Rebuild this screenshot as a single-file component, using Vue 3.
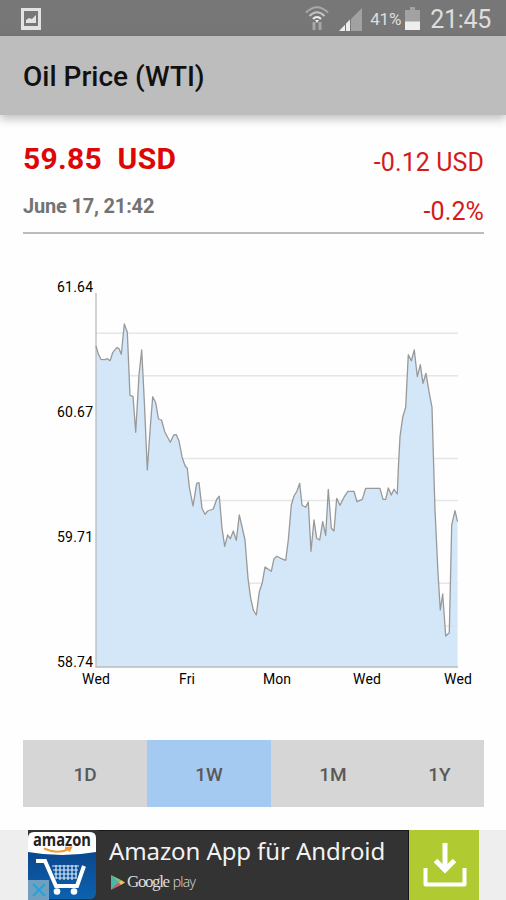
<template>
  <div class="screen">
    <div class="status-bar">
      <svg class="picture-icon" width="20" height="22" viewBox="0 0 20 22">
        <path fill="#e2e2e2" fill-rule="evenodd" d="M0 0h20v22H0zM3 3v15h14V3z" />
        <path fill="#e2e2e2" d="M5 15v-3l3-2 3 1 4-4v8z" />
      </svg>
      <svg class="wifi-icon" width="24" height="26" viewBox="0 0 24 26">
        <g fill="none" stroke-width="2">
          <path stroke="#a9a9a9" d="M1 7.5Q12-3 23 7.5" />
          <path stroke="#c4c4c4" d="M4.5 11Q12 3.500 19.500 11" />
          <path stroke="#eee" d="M8 14Q12 10 16 14" />
        </g>
        <path fill="#eee" d="M10 15h4l-2 3z" />
        <path stroke="#a6a6a6" stroke-width="3" d="M9 17v8M15 25v-8" />
      </svg>
      <svg class="signal-icon" width="23" height="23" viewBox="0 0 23 23">
        <path fill="#a2a2a2" d="M23 0v23H11V12z" />
        <path fill="#eee" d="M0 23L11 11.500V23z" />
        <path stroke="#777" stroke-width="1" d="M6.500 14v9M11.500 10v13" />
      </svg>
      <span class="battery-text">41%</span>
      <svg class="battery-icon" width="15" height="23" viewBox="0 0 15 23">
        <path fill="#a2a2a2" d="M5 0h5v3h5v12H0V3h5z" />
        <path fill="#eee" d="M0 14.500h15V23H0z" />
      </svg>
      <span class="clock">21:45</span>
    </div>

    <div class="app-bar">
      <h1>Oil Price (WTI)</h1>
    </div>

    <div class="summary">
      <div class="summary-left">
        <div class="price">59.85&nbsp; USD</div>
        <div class="date">June 17, 21:42</div>
      </div>
      <div class="summary-right">
        <div>-0.12 USD</div>
        <div>-0.2%</div>
      </div>
    </div>

    <svg class="chart" width="506" height="430" viewBox="0 270 506 430">
      <g stroke="#e6e6e6" stroke-width="1.500">
        <line v-for="y in gridLines" :key="y" x1="96" x2="458" :y1="y" :y2="y" />
      </g>
      <path class="area" :d="areaPath" />
      <path class="axis" d="M96 293V667H458" />
      <path class="line" :d="linePath" />
      <g text-anchor="end">
        <text v-for="l in yLabels" :key="l.text" x="93" :y="l.y" textLength="36">{{ l.text }}</text>
      </g>
      <g text-anchor="middle">
        <text v-for="l in xLabels" :key="l.x" :x="l.x" y="683.500" :textLength="l.w">{{ l.text }}</text>
      </g>
    </svg>

    <div class="ranges">
      <button
        v-for="r in ranges"
        :key="r"
        :class="{ active: r === selected }"
        @click="selected = r"
      >{{ r }}</button>
    </div>

    <div class="ad">
      <div class="ad-banner">
        <svg class="ad-logo" width="70" height="70" viewBox="0 0 70 70">
          <defs>
            <linearGradient id="blue" x1="0" y1="0" x2="0" y2="1">
              <stop offset="0" stop-color="#0a3c80" />
              <stop offset="1" stop-color="#0c62ae" />
            </linearGradient>
          </defs>
          <rect y="2" width="68" height="67" rx="6" fill="url(#blue)" />
          <path fill="#fff" d="M0 8Q0 2 6 2H62Q68 2 68 8V22Q34 28 0 22z" />
          <text class="amazon" x="5" y="16" textLength="58" lengthAdjust="spacingAndGlyphs">amazon</text>
          <path fill="none" stroke="#f49a35" stroke-width="2" d="M16 18.500Q30 25 42 18.500M37 18l6-.5-2 4" />
          <path fill="none" stroke="#fff" stroke-width="4" d="M8 31h9l11 25h21l7-20" />
          <path fill="none" stroke="#dbe8f5" stroke-width="1.200" d="M24 36h27M25 40h25M26 44h23M28 48h20M28 35v14M32 35v15M36 35v15M40 35v15M44 35v15M48 35v14" />
          <circle cx="29" cy="61.500" r="3.300" fill="#fff" />
          <circle cx="46" cy="61.500" r="3.300" fill="#fff" />
          <path fill="#719fc0" d="M0 50h21v20H0z" />
          <path stroke="#23a3d8" stroke-width="2" d="M5 54l12 12M17 54L5 66" />
        </svg>
        <div class="ad-text">
          <div class="ad-title">Amazon App für Android</div>
          <div class="google-play">
            <svg width="14" height="15" viewBox="0 0 14 15">
              <path fill="#48b9a5" d="M0 0l8 7.500L0 15z" />
              <path fill="#75c884" d="M0 0l10 5-2.500 2.500z" />
              <path fill="#dc5960" d="M0 15l10-5-2.500-2.500z" />
              <path fill="#efc35c" d="M10 5l4 2.500-4 2.500-2.500-2.500z" />
            </svg>
            <span class="google">Google</span>
            <span class="play">play</span>
          </div>
        </div>
        <div class="download">
          <svg width="44" height="46" viewBox="0 0 44 46">
            <g fill="none" stroke="#fff">
              <path stroke-width="5" d="M22 1v25" />
              <path stroke-width="5" d="M12.500 18.500L22 28l9.500-9.500" />
              <path stroke-width="4" stroke-linejoin="round" d="M2.500 26v16.500h39V26" />
            </g>
          </svg>
        </div>
      </div>
    </div>
  </div>
</template>

<script setup>
import { ref, computed } from 'vue'

const ranges = ['1D', '1W', '1M', '1Y']
const selected = ref('1W')

const gridLines = [333.3, 375.7, 458.5, 500.5, 583.3, 626]

const yLabels = [
  { text: '61.64', y: 292.4 },
  { text: '60.67', y: 417.4 },
  { text: '59.71', y: 542.4 },
  { text: '58.74', y: 667 }
]

const xLabels = [
  { text: 'Wed', x: 96, w: 28 },
  { text: 'Fri', x: 187, w: 16 },
  { text: 'Mon', x: 277, w: 28 },
  { text: 'Wed', x: 367, w: 28 },
  { text: 'Wed', x: 458, w: 28 }
]

// x,y pairs of the price curve
const points = `
  96,346 98.3,354 101,359.3 105,359.7 107,358.5 110,360.7 112.7,352.7 116.7,347.7
  119,348.7 121.3,354.3 124.3,324 127.3,332.3 130,395.3 133,396.3 135.7,432.3
  139,375 141.7,350 144.5,405 147.3,470 150.3,426.7 152.7,396.7 155.7,402.7
  158.5,419 161.5,420 164.7,431.7 170.3,442.3 173.7,435 176.3,434.7 179,441
  182,456.7 185,465.7 187.3,468.3 189.3,487 193,506 196.7,483.3 199,482.7
  202,508.3 205,514.3 207.7,511 213.3,509 216.7,499.3 219.3,496.3 222,528
  224.7,546.3 227.7,535 230.3,538.7 233.3,531 236.3,540.3 239.3,515 242.3,528
  245,540 248,578.3 250.7,598.3 253.3,610 256.3,615 259.3,591.7 262.3,582.7
  265,567 271.3,571.3 274,558.7 277,556.3 280.7,558.3 285.7,560.3 288.3,540
  291.3,505 294,496 297,491 299.7,483.3 302,505.3 305.7,507.3 308.3,502
  311,551.3 314,520 316.7,538.3 319.7,540 322.7,521.7 325.7,535.3 328.3,489.3
  331.3,528.3 334,531 336.7,498.3 340,505.3 344.3,496.7 348,491.3 354,491.3
  357,501.7 362.3,499.3 365.7,488.3 380,488.3 383,499.3 385.7,499.3 388.3,488
  391.3,495 394,489.3 397.3,494 398.5,465 400,436.7 402.7,417.3 405.7,407.3
  408.3,354.7 411.3,360.7 414.3,350 417.3,376.7 420.3,364.7 423,383.3 426,373.3
  429,391.7 432,407.3 433.7,466.7 435,510 438,573.3 440.3,610 442.7,594
  445.7,636 449.3,632.7 451.7,525 455,510.7 457.5,521.7
`.trim().split(/\s+/)

const linePath = computed(() => 'M' + points.join('L'))
const areaPath = computed(() => `${linePath.value}V667H96Z`)
</script>

<style>
body {
  margin: 0;
  background: #fff;
}
</style>

<style scoped>
.screen {
  width: 506px;
  height: 900px;
  overflow: hidden;
  display: flex;
  flex-direction: column;
  background: #fefefe;
  font-family: Roboto, "Liberation Sans", sans-serif;
}

.screen > * {
  flex-shrink: 0;
}

.status-bar {
  height: 36px;
  box-sizing: border-box;
  display: flex;
  align-items: flex-start;
  padding: 0 15px 0 21px;
  background: #777;
  color: #dedede;
}

.picture-icon {
  margin-top: 8px;
}

.wifi-icon {
  margin: 5px 0 0 auto;
}

.signal-icon {
  margin: 8px 8px 0 10px;
}

.battery-text {
  width: 36px;
  font-size: 17px;
  line-height: 39px;
  letter-spacing: -0.2px;
}

.battery-icon {
  margin: 7px 1px 0 -1px;
}

.clock {
  margin-left: 9px;
  font-size: 25px;
  line-height: 40px;
  letter-spacing: -0.3px;
}

.app-bar {
  height: 79px;
  display: flex;
  align-items: center;
  padding-left: 23px;
  background: #bdbdbd;
  box-shadow: 0 4px 9px rgba(0, 0, 0, 0.25);
}

.app-bar h1 {
  margin: 1px 0 0;
  font-size: 28px;
  font-weight: 500;
  color: #111;
}

.summary {
  height: 119px;
  box-sizing: border-box;
  margin: 0 22px 0 23px;
  display: flex;
  justify-content: space-between;
  border-bottom: 2px solid #bdbdbd;
}

.summary-left {
  padding-top: 25px;
}

.price {
  font-size: 30px;
  line-height: 38px;
  font-weight: 700;
  letter-spacing: 0.3px;
  white-space: nowrap;
  color: #dc0707;
}

.date {
  margin-top: 16px;
  font-size: 20px;
  line-height: 25px;
  font-weight: 700;
  letter-spacing: -0.18px;
  color: #737373;
}

.summary-right {
  padding-top: 24px;
  font-size: 25px;
  line-height: 48px;
  letter-spacing: 0.1px;
  text-align: right;
  color: #d51a1a;
}

.summary-right div + div {
  line-height: 49px;
}

.chart {
  display: block;
  margin-top: 36px;
}

.chart text {
  font-size: 14px;
  fill: #000;
}

.area {
  fill: #d0e5f8;
  fill-opacity: 0.93;
}

.line {
  fill: none;
  stroke: #999;
  stroke-width: 1.3;
  stroke-linejoin: round;
}

.axis {
  fill: none;
  stroke: #bbb;
  stroke-width: 1.3;
}

.ranges {
  height: 67px;
  margin: 40px 22px 0 23px;
  display: grid;
  grid-template-columns: 124px 124px 124px 89px;
}

.ranges button {
  padding: 2px 0 0;
  border: 0;
  background: #d6d6d6;
  font-family: inherit;
  font-size: 19px;
  font-weight: 500;
  color: #595959;
}

.ranges button.active {
  background: #a5caf1;
}

.ad {
  height: 70px;
  margin-top: 23px;
  padding: 0 27px 0 28px;
  background: #eee;
}

.ad-banner {
  height: 70px;
  display: flex;
  background: #333;
}

.ad-logo {
  display: block;
}

.ad-logo .amazon {
  font-family: "Open Sans", "Noto Sans", sans-serif;
  font-size: 17px;
  font-weight: 700;
  fill: #222;
}

.ad-text {
  flex: 1;
  padding: 4px 0 0 11px;
  box-shadow: inset 0 1px #181818;
}

.ad-title {
  font-family: "Noto Sans", "Open Sans", sans-serif;
  font-size: 24px;
  line-height: 34px;
  letter-spacing: -0.1px;
  white-space: nowrap;
  color: #f2f2f2;
}

.google-play {
  display: flex;
  align-items: center;
  margin: 3px 0 0 2px;
  line-height: 22px;
  color: #ddd;
}

.google {
  margin-left: 2px;
  font-family: "Liberation Serif", serif;
  font-size: 17px;
  letter-spacing: -1.4px;
}

.play {
  margin-left: 4px;
  font-family: "Open Sans", sans-serif;
  font-size: 14px;
  font-weight: 300;
  letter-spacing: -0.7px;
}

.download {
  width: 71px;
  box-sizing: border-box;
  padding: 12px 0 0 14px;
  border-left: 1px solid #171717;
  background: #b0cb32;
}
</style>
